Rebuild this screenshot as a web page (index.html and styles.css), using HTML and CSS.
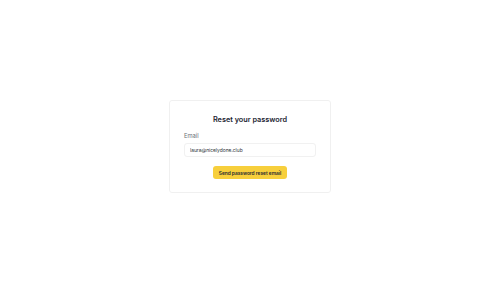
FILE: index.html
```html
<!DOCTYPE html>
<html lang="en">
<head>
  <meta charset="UTF-8">
  <meta name="viewport" content="width=device-width, initial-scale=1.0">
  <title>Reset your password</title>
  <link rel="stylesheet" href="styles.css">
</head>
<body>

  <div class="reset-card">
    <h1>Reset your password</h1>
    <label for="email" class="field-label">Email</label>
    <input type="text" id="email" class="field-input" value="laura@nicelydone.club">
    <div class="actions">
      <button class="send-button">Send password reset email</button>
    </div>
  </div>

</body>
</html>
```

FILE: styles.css
```css
body {
  font-family: Inter, "Open Sans", Arial, sans-serif;
  background-color: #ffffff;
  margin: 0;
  padding: 0;
  display: flex;
  justify-content: center;
  align-items: center;
  height: 100vh;
}
.reset-card {
  width: 132px;
  padding: 13px 14px;
  background-color: #ffffff;
  border: 1px solid #f0f0f0;
  border-radius: 3px;
  display: flex;
  flex-direction: column;
}
h1 {
  margin: 0 0 6px;
  text-align: center;
  font-size: 7.3px;
  line-height: 12px;
  font-weight: 600;
  color: #1c2532;
}
.field-label {
  font-size: 5.8px;
  line-height: 7px;
  color: #6b6f76;
  margin-bottom: 4px;
}
.field-input {
  box-sizing: border-box;
  width: 100%;
  height: 14px;
  padding: 0 5px;
  border: 1px solid #f1f1f1;
  border-radius: 3px;
  font-family: inherit;
  font-size: 4.9px;
  color: #2a2f36;
  outline: none;
}
.actions {
  display: flex;
  justify-content: center;
  margin-top: 9px;
}
.send-button {
  height: 13px;
  padding: 0 6px;
  border: none;
  border-radius: 3px;
  background-color: #f7cf3c;
  color: #1c2532;
  font-family: inherit;
  font-size: 4.8px;
  font-weight: 600;
  cursor: pointer;
}
```
